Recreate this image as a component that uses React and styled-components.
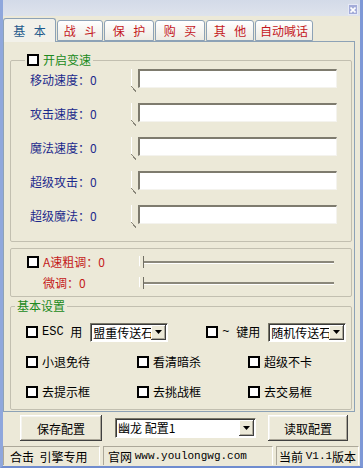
import React from 'react';
import styled, { createGlobalStyle } from 'styled-components';

const CJK = `"Noto Sans CJK SC", "Liberation Sans", sans-serif`;
const MONO = `"Liberation Mono", "Noto Sans CJK SC", monospace`;

const GlobalStyle = createGlobalStyle`
  html, body { margin: 0; padding: 0; background: #ECE9D8; }
  body { font-family: ${CJK}; font-size: 12px; }
  * { box-sizing: border-box; }
`;

const Window = styled.div`
  width: 363px;
  height: 468px;
  display: flex;
  flex-direction: column;
  background: #ECE9D8;
  border-left: 3px solid #8FA7DC;
  border-right: 3px solid #7E98D6;
  border-bottom: 2px solid #6F8CCF;
  overflow: hidden;
`;

const TitleStrip = styled.div`
  height: 16px;
  flex: none;
  display: flex;
  justify-content: flex-end;
  align-items: flex-start;
  padding: 4px 2px 0 0;
  background: linear-gradient(#D3DAE8, #DEE3EC);
`;

const CloseBtn = styled.div`
  width: 10px;
  height: 11px;
  background: #A3ACD9;
  border: 1px solid #E6E9F6;
  display: flex;
  align-items: center;
  justify-content: center;
`;

const TabRow = styled.div`
  height: 25px;
  flex: none;
  display: flex;
  align-items: flex-end;
  gap: 1px;
`;

const Tab = styled.div`
  width: ${p => p.$w}px;
  height: ${p => (p.$active ? 24 : 21)}px;
  margin-bottom: ${p => (p.$active ? -1 : 0)}px;
  position: relative;
  z-index: ${p => (p.$active ? 2 : 1)};
  display: flex;
  align-items: center;
  justify-content: center;
  border: 1px solid #8DA2B6;
  border-bottom: ${p => (p.$active ? 'none' : '1px solid #8DA2B6')};
  border-radius: 3px 3px 0 0;
  background: ${p => (p.$active ? '#F2F1EA' : 'linear-gradient(#FFFFFF, #EDEBE3)')};
  color: ${p => (p.$active ? '#1F5A8C' : '#C4161C')};
  font-size: 12px;
  line-height: 12px;
  white-space: pre;
  word-spacing: 6px;
`;

const Panel = styled.div`
  margin-right: 5px;
  border: 1px solid #8DA2B6;
  background: #ECE9D8;
  padding: 12px 2px 1px 6px;
  display: flex;
  flex-direction: column;
`;

const Group = styled.fieldset`
  margin: ${p => p.$mt || 0}px 0 0 0;
  padding: 0;
  border: 1px solid #C2BFB0;
  border-radius: 2px;
  min-width: 0;
`;

const Legend = styled.legend`
  margin-left: ${p => p.$ml}px;
  padding: 0 2px;
  height: 12px;
  line-height: 12px;
  display: flex;
  align-items: center;
  gap: 4px;
  color: #208A20;
  font-size: 12px;
`;

const Box = styled.span`
  width: 12px;
  height: 12px;
  flex: none;
  background: #fff;
  border: 2px solid #000;
  display: inline-block;
`;

const Spacer = styled.span`
  width: 12px;
  height: 12px;
  flex: none;
`;

const SpeedRows = styled.div`
  display: flex;
  flex-direction: column;
  gap: 6px;
  padding: 0 14px 11px 19px;
`;

const SpeedRow = styled.div`
  height: 28px;
  display: grid;
  grid-template-columns: 101px 1fr;
  align-items: center;
`;

const Label = styled.span`
  color: ${p => p.$color || '#000'};
  font-size: 12px;
  line-height: 14px;
  white-space: pre;
`;

const BigSlider = styled.div`
  display: flex;
  align-items: flex-start;
  height: 22px;
`;

const BigThumb = styled.div`
  width: 7px;
  height: 23px;
  flex: none;
  background: linear-gradient(90deg, #fff 0 1px, #ECE9D8 1px);
  position: relative;
  &::after {
    content: '';
    position: absolute;
    left: 0;
    bottom: 0;
    width: 5px;
    height: 6px;
    background: linear-gradient(to top right, #ECE9D8 45%, #8a877a 45% 60%, transparent 60%);
  }
`;

const BigChannel = styled.div`
  flex: 1;
  height: 19px;
  background: #fff;
  border-top: 2px solid #7E7B6E;
  border-left: 2px solid #7E7B6E;
  border-right: 1px solid #F4F3EE;
  border-bottom: 1px solid #F4F3EE;
`;

const FineRows = styled.div`
  display: flex;
  flex-direction: column;
  gap: 1px;
  padding: 3px 17px 3px 16px;
`;

const FineRow = styled.div`
  height: 20px;
  display: grid;
  grid-template-columns: 12px 92px 1fr;
  column-gap: 4px;
  align-items: center;
`;

const SmallSlider = styled.div`
  display: flex;
  align-items: center;
  height: 12px;
`;

const SmallThumb = styled.div`
  width: 5px;
  height: 12px;
  flex: none;
  border-left: 1px solid #fff;
  border-right: 1px solid #716F64;
  background: #ECE9D8;
  clip-path: polygon(0 0, 100% 0, 100% 100%, 40% 100%, 0 80%);
`;

const SmallChannel = styled.div`
  flex: 1;
  height: 3px;
  border-top: 2px solid #8A877A;
  border-bottom: 1px solid #fff;
`;

const BasicBody = styled.div`
  display: flex;
  flex-direction: column;
  padding: 5px 0 2px 15px;
`;

const BasicRow = styled.div`
  height: 30px;
  display: flex;
  align-items: center;
`;

const CheckGrid = styled.div`
  height: 30px;
  display: grid;
  grid-template-columns: repeat(3, 111px);
  align-items: center;
`;

const Check = styled.label`
  display: flex;
  align-items: center;
  gap: 4px;
  margin-left: ${p => p.$ml || 0}px;
  font-size: 12px;
  line-height: 14px;
  color: #000;
  white-space: pre;
`;

const Mono = styled.span`
  font-family: ${MONO};
  font-size: ${p => p.$fs || 12}px;
`;

const Combo = styled.div`
  width: ${p => p.$w}px;
  height: ${p => p.$h}px;
  margin-left: ${p => p.$ml || 0}px;
  display: flex;
  flex: none;
  background: #fff;
  border: 1px solid;
  border-color: #7A7869 #fff #fff #7A7869;
  box-shadow: inset 1px 1px 0 #3a3a3a;
  overflow: hidden;
`;

const ComboText = styled.span`
  flex: 1;
  min-width: 0;
  overflow: hidden;
  white-space: nowrap;
  padding: 0 0 0 2px;
  font-size: 12px;
  line-height: ${p => p.$h - 2}px;
  color: #000;
  font-family: ${CJK};
`;

const ComboBtn = styled.span`
  width: 15px;
  flex: none;
  margin: 1px 1px 1px 0;
  background: #ECE9D8;
  box-shadow: inset -1px -1px 0 #404040, inset 1px 1px 0 #fff, inset -2px -2px 0 #ACA899;
  display: flex;
  align-items: center;
  justify-content: center;
`;

const ActionRow = styled.div`
  height: 32px;
  flex: none;
  display: flex;
  align-items: center;
  padding: 0 0 0 17px;
`;

const Button = styled.div`
  width: ${p => p.$w}px;
  height: 26px;
  margin-left: ${p => p.$ml || 0}px;
  display: flex;
  align-items: center;
  justify-content: center;
  background: #ECE9D8;
  box-shadow: inset -1px -1px 0 #404040, inset 1px 1px 0 #fff, inset -2px -2px 0 #ACA899, inset 2px 2px 0 #F4F3EE;
  font-size: 12px;
  color: #000;
`;

const StatusBar = styled.div`
  height: 21px;
  flex: none;
  display: flex;
  align-items: flex-end;
  gap: 3px;
`;

const StatusCell = styled.div`
  width: ${p => p.$w}px;
  height: 19px;
  padding-left: ${p => p.$pl}px;
  border-top: 1px solid #ACA899;
  border-left: 1px solid #ACA899;
  border-right: 1px solid #fff;
  display: flex;
  align-items: center;
  font-size: 12px;
  white-space: pre;
  color: #000;
  overflow: hidden;
`;

const Arrow = () => (
  <svg width="7" height="4" viewBox="0 0 7 4"><path d="M0 0h7L3.5 4z" fill="#000" /></svg>
);

const ComboBox = ({ w, h, ml, text }) => (
  <Combo $w={w} $h={h} $ml={ml}>
    <ComboText $h={h}>{text}</ComboText>
    <ComboBtn><Arrow /></ComboBtn>
  </Combo>
);

const tabs = [
  { t: '基 本', w: 53, active: true },
  { t: '战 斗', w: 46 },
  { t: '保 护', w: 50 },
  { t: '购 买', w: 50 },
  { t: '其 他', w: 48 },
  { t: '自动喊话', w: 58 },
];

const speeds = ['移动速度：0', '攻击速度：0', '魔法速度：0', '超级攻击：0', '超级魔法：0'];

export default function App() {
  return (
    <>
      <GlobalStyle />
      <Window>
        <TitleStrip>
          <CloseBtn>
            <svg width="6" height="6" viewBox="0 0 6 6">
              <path d="M0.5 0.5L5.5 5.5M5.5 0.5L0.5 5.5" stroke="#fff" strokeWidth="1.6" />
            </svg>
          </CloseBtn>
        </TitleStrip>
        <TabRow>
          {tabs.map(tb => (
            <Tab key={tb.t} $w={tb.w} $active={tb.active}>{tb.t}</Tab>
          ))}
        </TabRow>
        <Panel>
          <Group>
            <Legend $ml={14}><Box />开启变速</Legend>
            <SpeedRows>
              {speeds.map(s => (
                <SpeedRow key={s}>
                  <Label $color="#1C2A8C">{s}</Label>
                  <BigSlider><BigThumb /><BigChannel /></BigSlider>
                </SpeedRow>
              ))}
            </SpeedRows>
          </Group>
          <Group $mt={6}>
            <FineRows>
              <FineRow>
                <Box />
                <Label $color="#C41A1A">A速粗调：0</Label>
                <SmallSlider><SmallThumb /><SmallChannel /></SmallSlider>
              </FineRow>
              <FineRow>
                <Spacer />
                <Label $color="#C41A1A">微调：0</Label>
                <SmallSlider><SmallThumb /><SmallChannel /></SmallSlider>
              </FineRow>
            </FineRows>
          </Group>
          <Group $mt={3}>
            <Legend $ml={4}>基本设置</Legend>
            <BasicBody>
              <BasicRow>
                <Check><Box /><Mono>ESC</Mono> 用</Check>
                <ComboBox w={78} h={19} ml={8} text="盟重传送石" />
                <Check $ml={38}><Box /><Mono>~</Mono> 键用</Check>
                <ComboBox w={78} h={19} ml={8} text="随机传送石" />
              </BasicRow>
              <CheckGrid>
                <Check><Box />小退免待</Check>
                <Check><Box />看清暗杀</Check>
                <Check><Box />超级不卡</Check>
              </CheckGrid>
              <CheckGrid>
                <Check><Box />去提示框</Check>
                <Check><Box />去挑战框</Check>
                <Check><Box />去交易框</Check>
              </CheckGrid>
            </BasicBody>
          </Group>
        </Panel>
        <ActionRow>
          <Button $w={82}>保存配置</Button>
          <ComboBox w={141} h={20} ml={13} text="幽龙 配置1" />
          <Button $w={80} $ml={12}>读取配置</Button>
        </ActionRow>
        <StatusBar>
          <StatusCell $w={97} $pl={6}>合击  引擎专用</StatusCell>
          <StatusCell $w={170} $pl={4}>官网 <Mono $fs={11}>www.youlongwg.com</Mono></StatusCell>
          <StatusCell $w={83} $pl={2}>当前 <Mono $fs={11}>V1.1</Mono>版本</StatusCell>
        </StatusBar>
      </Window>
    </>
  );
}
